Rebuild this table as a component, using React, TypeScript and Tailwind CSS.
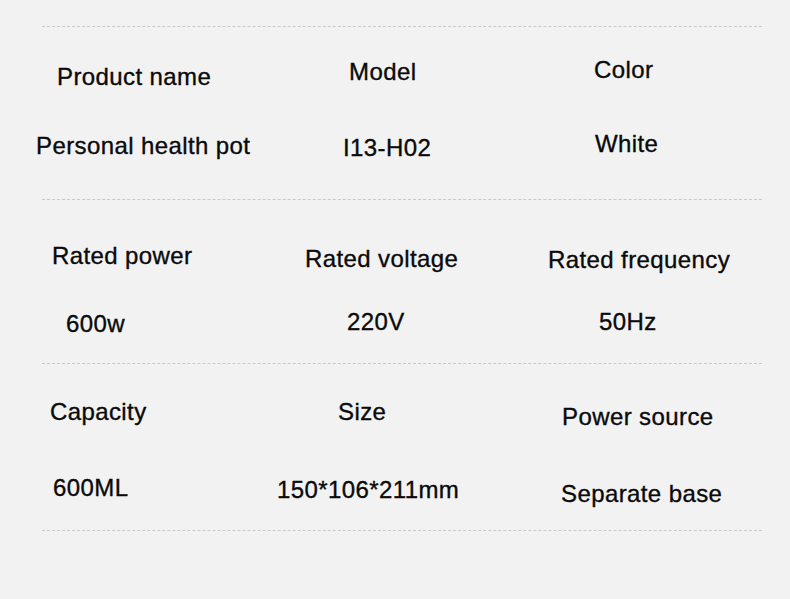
import React from 'react';

interface Cell {
  label: string;
  value: string;
  labelCls: string;
  valueCls: string;
}

interface Section {
  height: string;
  cells: Cell[];
}

const sections: Section[] = [
  {
    height: 'h-[172px]',
    cells: [
      { label: 'Product name', value: 'Personal health pot', labelCls: 'ml-[57px] mt-[38px]', valueCls: 'ml-[36px] mt-[45px]' },
      { label: 'Model', value: 'I13-H02', labelCls: 'ml-[79px] mt-[33px]', valueCls: 'ml-[73px] mt-[52px]' },
      { label: 'Color', value: 'White', labelCls: 'ml-[54px] mt-[31px]', valueCls: 'ml-[55px] mt-[50px]' },
    ],
  },
  {
    height: 'h-[163px]',
    cells: [
      { label: 'Rated power', value: '600w', labelCls: 'ml-[52px] mt-[44px]', valueCls: 'ml-[66px] mt-[44px]' },
      { label: 'Rated voltage', value: '220V', labelCls: 'ml-[35px] mt-[47px]', valueCls: 'ml-[77px] mt-[39px]' },
      { label: 'Rated frequency', value: '50Hz', labelCls: 'ml-[8px] mt-[48px]', valueCls: 'ml-[59px] mt-[38px]' },
    ],
  },
  {
    height: 'h-[166px]',
    cells: [
      { label: 'Capacity', value: '600ML', labelCls: 'ml-[50px] mt-[36px]', valueCls: 'ml-[53px] mt-[52px]' },
      { label: 'Size', value: '150*106*211mm', labelCls: 'ml-[68px] mt-[36px]', valueCls: 'ml-[7px] mt-[54px]' },
      { label: 'Power source', value: 'Separate base', labelCls: 'ml-[22px] mt-[41px]', valueCls: 'ml-[21px] mt-[53px]' },
    ],
  },
];

const colWidths = ['w-[270px]', 'w-[270px]', 'flex-1'];

const Divider: React.FC = () => (
  <div className="ml-[42px] w-[720px] border-t border-dashed border-[#c9c9c9]" />
);

export default function App() {
  return (
    <div
      className="w-[790px] h-[599px] bg-[#f2f2f2] pt-[26px] text-[#0a0a0a] text-[24px] leading-none tracking-[0.4px] [-webkit-text-stroke:0.35px_#0a0a0a] overflow-hidden"
      style={{ fontFamily: '"Liberation Sans", Arial, sans-serif' }}
    >
      {sections.map((section, i) => (
        <div key={i}>
          <Divider />
          <div className={`flex ${section.height}`}>
            {section.cells.map((cell, j) => (
              <div key={cell.label} className={`flex flex-col items-start ${colWidths[j]}`}>
                <span className={`whitespace-nowrap ${cell.labelCls}`}>{cell.label}</span>
                <span className={`whitespace-nowrap ${cell.valueCls}`}>{cell.value}</span>
              </div>
            ))}
          </div>
        </div>
      ))}
      <Divider />
    </div>
  );
}
